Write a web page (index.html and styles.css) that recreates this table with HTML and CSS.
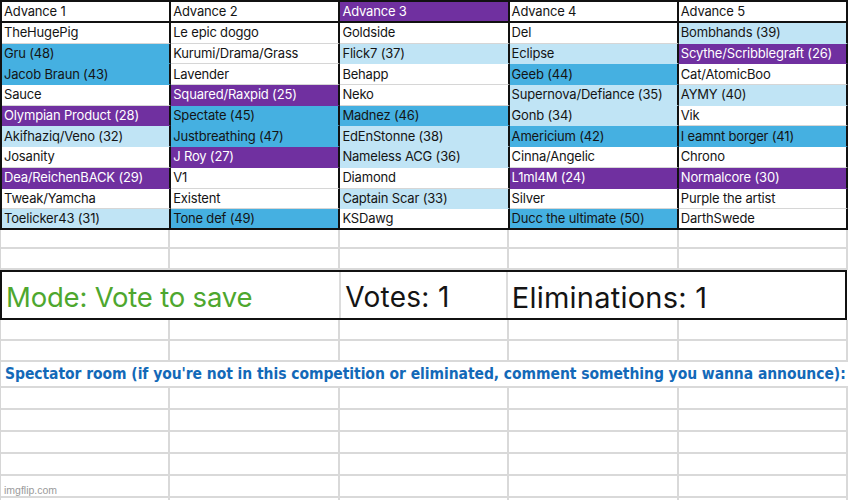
FILE: index.html
```html
<!DOCTYPE html>
<html>
<head>
<meta charset="utf-8">
<link rel="stylesheet" href="styles.css">
</head>
<body>
<div class="sheet">
  <div class="roster">
    <div class="cell head">Advance 1</div>
    <div class="cell head">Advance 2</div>
    <div class="cell head purple">Advance 3</div>
    <div class="cell head">Advance 4</div>
    <div class="cell head">Advance 5</div>

    <div class="cell">TheHugePig</div>
    <div class="cell">Le epic doggo</div>
    <div class="cell">Goldside</div>
    <div class="cell">Del</div>
    <div class="cell light">Bombhands (39)</div>

    <div class="cell mid">Gru (48)</div>
    <div class="cell">Kurumi/Drama/Grass</div>
    <div class="cell light">Flick7 (37)</div>
    <div class="cell light">Eclipse</div>
    <div class="cell purple">Scythe/Scribblegraft (26)</div>

    <div class="cell mid">Jacob Braun (43)</div>
    <div class="cell">Lavender</div>
    <div class="cell">Behapp</div>
    <div class="cell mid">Geeb (44)</div>
    <div class="cell">Cat/AtomicBoo</div>

    <div class="cell">Sauce</div>
    <div class="cell purple">Squared/Raxpid (25)</div>
    <div class="cell">Neko</div>
    <div class="cell light">Supernova/Defiance (35)</div>
    <div class="cell light">AYMY (40)</div>

    <div class="cell purple">Olympian Product (28)</div>
    <div class="cell mid">Spectate (45)</div>
    <div class="cell mid">Madnez (46)</div>
    <div class="cell light">Gonb (34)</div>
    <div class="cell">Vik</div>

    <div class="cell light">Akifhaziq/Veno (32)</div>
    <div class="cell mid">Justbreathing (47)</div>
    <div class="cell light">EdEnStonne (38)</div>
    <div class="cell mid">Americium (42)</div>
    <div class="cell mid">I eamnt borger (41)</div>

    <div class="cell">Josanity</div>
    <div class="cell purple">J Roy (27)</div>
    <div class="cell light">Nameless ACG (36)</div>
    <div class="cell">Cinna/Angelic</div>
    <div class="cell">Chrono</div>

    <div class="cell purple">Dea/ReichenBACK (29)</div>
    <div class="cell">V1</div>
    <div class="cell">Diamond</div>
    <div class="cell purple">L1ml4M (24)</div>
    <div class="cell purple">Normalcore (30)</div>

    <div class="cell">Tweak/Yamcha</div>
    <div class="cell">Existent</div>
    <div class="cell light">Captain Scar (33)</div>
    <div class="cell">Silver</div>
    <div class="cell">Purple the artist</div>

    <div class="cell last light">Toelicker43 (31)</div>
    <div class="cell last mid">Tone def (49)</div>
    <div class="cell last">KSDawg</div>
    <div class="cell last mid">Ducc the ultimate (50)</div>
    <div class="cell last">DarthSwede</div>
  </div>

  <div class="blank-row short"><div></div><div></div><div></div><div></div><div></div></div>
  <div class="blank-row"><div></div><div></div><div></div><div></div><div></div></div>

  <div class="mode-row">
    <div class="mode">Mode: Vote to save</div>
    <div class="votes">Votes: 1</div>
    <div class="elims">Eliminations: 1</div>
  </div>

  <div class="blank-row"><div></div><div></div><div></div><div></div><div></div></div>
  <div class="blank-row"><div></div><div></div><div></div><div></div><div></div></div>

  <div class="spectator">Spectator room (if you're not in this competition or eliminated, comment something you wanna announce):</div>

  <div class="blank-row tall"><div></div><div></div><div></div><div></div><div></div></div>
  <div class="blank-row tall"><div></div><div></div><div></div><div></div><div></div></div>
  <div class="blank-row tall"><div></div><div></div><div></div><div></div><div></div></div>
  <div class="blank-row tall"><div></div><div></div><div></div><div></div><div></div></div>
  <div class="blank-row tall"><div></div><div></div><div></div><div></div><div></div></div>
  <div class="blank-row tall"><div></div><div></div><div></div><div></div><div></div></div>

  <div class="watermark">imgflip.com</div>
</div>
</body>
</html>
```
FILE: styles.css
```css
* { box-sizing: border-box; }
html, body {
  margin: 0;
  padding: 0;
  background: #fff;
  width: 848px;
  height: 500px;
  overflow: hidden;
}
.sheet {
  position: relative;
  width: 848px;
  height: 500px;
  overflow: hidden;
  font-family: "Inter", "Open Sans", sans-serif;
  color: #141414;
}
.roster {
  display: grid;
  grid-template-columns: repeat(5, 1fr);
  grid-template-rows: 21px repeat(10, 20.7px);
  border-top: 2px solid #111;
  border-left: 2px solid #111;
}
.cell {
  font-size: 13px;
  letter-spacing: -0.18px;
  line-height: 1;
  padding: 0 0 0 2px;
  display: flex;
  align-items: center;
  white-space: nowrap;
  overflow: hidden;
  border-right: 2px solid #111;
  border-bottom: 1px solid #d6d6d6;
  background: #fff;
}
.cell.head {
  border-bottom: 2px solid #111;
}
.cell.last {
  border-bottom: 2px solid #111;
}
.cell.purple {
  background: #7030a0;
  color: #fff;
  border-bottom-color: #7030a0;
}
.cell.mid {
  background: #45b0e1;
  border-bottom-color: #45b0e1;
}
.cell.light {
  background: #c0e4f5;
  border-bottom-color: #c0e4f5;
}
.cell.head, .cell.last { border-bottom-color: #111; }

.blank-row {
  display: grid;
  grid-template-columns: repeat(5, 1fr);
  height: 21px;
  border-left: 1px solid #d6d6d6;
}
.blank-row.short { height: 19px; }
.blank-row.tall { height: 22px; }
.blank-row > div {
  border-right: 2px solid #d9d9d9;
  border-bottom: 2px solid #d9d9d9;
}

.mode-row {
  display: grid;
  grid-template-columns: 2fr 1fr 2fr;
  height: 50px;
  border: 2px solid #111;
  width: 847px;
}
.mode-row > div {
  display: flex;
  align-items: center;
  padding-left: 4px;
  padding-top: 5px;
  white-space: nowrap;
}
.mode { color: #4ea72e; font-size: 27.5px; letter-spacing: -0.2px; padding-left: 3px; }
.votes {
  font-size: 28px;
  letter-spacing: 0.3px;
  padding-left: 3px;
  border-left: 2px solid #dcdcdc;
  border-right: 2px solid #dcdcdc;
}
.elims { font-size: 29px; letter-spacing: 0.23px; }

.spectator {
  height: 26px;
  display: flex;
  align-items: center;
  padding-left: 4px;
  font-family: "DejaVu Sans", sans-serif;
  font-stretch: condensed;
  font-weight: bold;
  font-size: 15.5px;
  letter-spacing: -0.06px;
  color: #1369b8;
  white-space: nowrap;
  border-bottom: 2px solid #d9d9d9;
  border-left: 1px solid #d6d6d6;
}

.watermark {
  position: absolute;
  left: 4px;
  bottom: 4px;
  font-family: "Liberation Sans", Arial, sans-serif;
  font-size: 10.5px;
  color: #9a9a9a;
}
```
